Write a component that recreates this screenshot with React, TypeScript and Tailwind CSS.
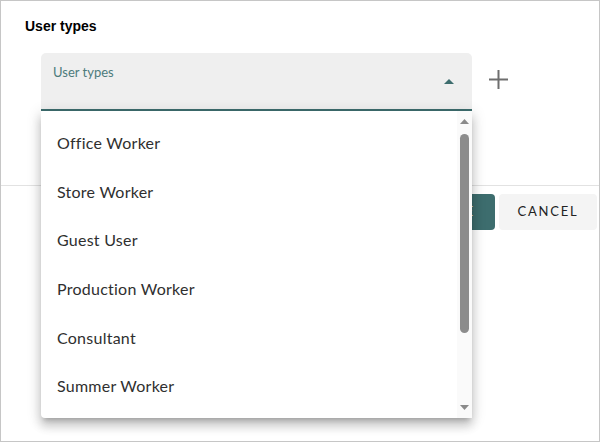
const OPTIONS = [
  'Office Worker',
  'Store Worker',
  'Guest User',
  'Production Worker',
  'Consultant',
  'Summer Worker',
];

export default function App() {
  return (
    <div className="relative w-[600px] h-[442px] bg-white border border-[#c6c6c6] overflow-hidden font-['Lato',sans-serif]">
      {/* Section title */}
      <div className="pl-6 pt-[15px] text-[14px] font-bold text-black font-['Liberation_Sans',sans-serif]">
        User types
      </div>

      {/* Select + add */}
      <div className="flex items-start mt-[16px] pl-10">
        <div className="relative w-[431px] h-[58px] bg-[#efefef] rounded-t-[5px] border-b-2 border-[#3d6d6e]">
          <span className="absolute left-3 top-[10px] text-[13px] text-[#4d7b7c]">User types</span>
          <svg className="absolute right-[18px] top-[26px] w-[10px] h-[5px]" viewBox="0 0 10 5">
            <path d="M0 5 L5 0 L10 5 Z" fill="#3d6d6e" />
          </svg>
        </div>
        <svg className="ml-[17px] mt-[17px] w-[19px] h-[19px]" viewBox="0 0 19 19">
          <path d="M9.5 0 V19 M0 9.5 H19" stroke="#6e6e6e" strokeWidth="2" />
        </svg>
      </div>

      {/* Divider + actions */}
      <div className="mt-[74px] border-t border-[#e2e2e2]">
        <div className="flex justify-end gap-1 pr-[2px] pt-2">
          <button className="h-9 px-5 rounded-[4px] bg-[#3d6d6e] text-white text-[13px] tracking-[2px]">
            SAVE
          </button>
          <button className="h-9 w-[98px] rounded-[4px] bg-[#f4f4f4] text-[#222] text-[13px] tracking-[1.8px]">
            CANCEL
          </button>
        </div>
      </div>

      {/* Open dropdown menu */}
      <div className="absolute left-10 top-[110px] w-[431px] h-[307px] bg-white rounded-b-[4px] shadow-[0_5px_5px_-3px_rgba(0,0,0,0.2),0_8px_10px_1px_rgba(0,0,0,0.14),0_3px_14px_2px_rgba(0,0,0,0.12)] flex">
        <ul className="flex-1 pt-2">
          {OPTIONS.map((o) => (
            <li key={o} className="h-[48.6px] flex items-center pl-4 text-[16px] tracking-[0.25px] text-[#2f2f2f]">
              {o}
            </li>
          ))}
        </ul>
        {/* Scrollbar */}
        <div className="w-[15px] bg-[#fafafa] flex flex-col items-center py-[8px]">
          <svg className="w-[9px] h-[5px]" viewBox="0 0 9 5">
            <path d="M0 5 L4.5 0 L9 5 Z" fill="#8a8a8a" />
          </svg>
          <div className="mt-[10px] w-[9px] h-[199px] rounded-full bg-[#8c8c8c]" />
          <div className="flex-1" />
          <svg className="w-[9px] h-[5px]" viewBox="0 0 9 5">
            <path d="M0 0 L4.5 5 L9 0 Z" fill="#8a8a8a" />
          </svg>
        </div>
      </div>
    </div>
  );
}
